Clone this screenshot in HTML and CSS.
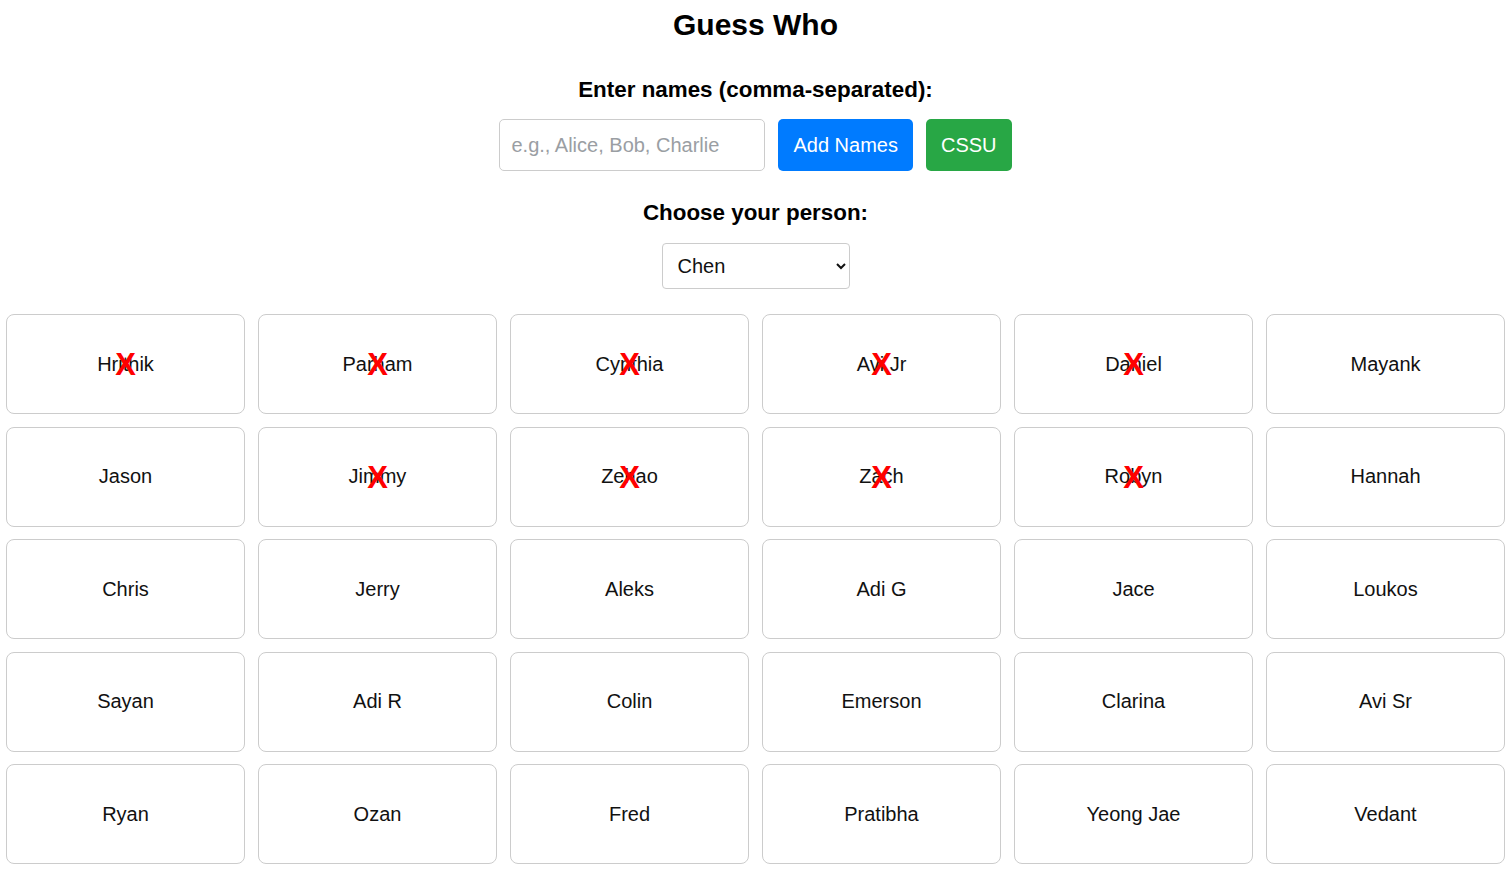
FILE: index.html
```html
<!DOCTYPE html>
<html lang="en">
<head>
<meta charset="utf-8">
<title>Guess Who</title>
<link rel="stylesheet" href="styles.css">
</head>
<body>
<div class="app">
  <h1 class="title">Guess Who</h1>
  <h2 class="label">Enter names (comma-separated):</h2>
  <div class="controls">
    <input class="names-input" type="text" placeholder="e.g., Alice, Bob, Charlie">
    <button class="btn btn-blue">Add Names</button>
    <button class="btn btn-green">CSSU</button>
  </div>
  <h2 class="label label-choose">Choose your person:</h2>
  <div class="select-row">
    <select class="person-select">
      <option>Chen</option>
    </select>
  </div>
  <div class="grid">
    <div class="card out"><span>Hrithik</span><span class="mark">X</span></div>
    <div class="card out"><span>Parham</span><span class="mark">X</span></div>
    <div class="card out"><span>Cynthia</span><span class="mark">X</span></div>
    <div class="card out"><span>Avi Jr</span><span class="mark">X</span></div>
    <div class="card out"><span>Daniel</span><span class="mark">X</span></div>
    <div class="card"><span>Mayank</span></div>

    <div class="card"><span>Jason</span></div>
    <div class="card out"><span>Jimmy</span><span class="mark">X</span></div>
    <div class="card out"><span>Zehao</span><span class="mark">X</span></div>
    <div class="card out"><span>Zach</span><span class="mark">X</span></div>
    <div class="card out"><span>Robyn</span><span class="mark">X</span></div>
    <div class="card"><span>Hannah</span></div>

    <div class="card"><span>Chris</span></div>
    <div class="card"><span>Jerry</span></div>
    <div class="card"><span>Aleks</span></div>
    <div class="card"><span>Adi G</span></div>
    <div class="card"><span>Jace</span></div>
    <div class="card"><span>Loukos</span></div>

    <div class="card"><span>Sayan</span></div>
    <div class="card"><span>Adi R</span></div>
    <div class="card"><span>Colin</span></div>
    <div class="card"><span>Emerson</span></div>
    <div class="card"><span>Clarina</span></div>
    <div class="card"><span>Avi Sr</span></div>

    <div class="card"><span>Ryan</span></div>
    <div class="card"><span>Ozan</span></div>
    <div class="card"><span>Fred</span></div>
    <div class="card"><span>Pratibha</span></div>
    <div class="card"><span>Yeong Jae</span></div>
    <div class="card"><span>Vedant</span></div>
  </div>
</div>
</body>
</html>
```

FILE: styles.css
```css
* { box-sizing: border-box; }

html, body {
  margin: 0;
  padding: 0;
  background: #fff;
}

body {
  font-family: "Liberation Sans", Arial, sans-serif;
  color: #111;
}

.app {
  padding: 8px 5px 0 6px;
  text-align: center;
}

.title {
  margin: 0;
  font-size: 30px;
  font-weight: bold;
  line-height: 34px;
  color: #000;
}

.label {
  margin: 35px 0 0;
  font-size: 22.4px;
  font-weight: bold;
  line-height: 26px;
  color: #000;
}

.controls {
  margin-top: 16px;
  display: flex;
  justify-content: center;
  gap: 13px;
}

.names-input {
  width: 266px;
  height: 52px;
  padding: 0 11px;
  border: 1px solid #ccc;
  border-radius: 5px;
  font-family: "Liberation Sans", Arial, sans-serif;
  font-size: 20px;
  color: #111;
  outline: none;
}

.names-input::placeholder {
  color: #9a9ea3;
}

.btn {
  height: 52px;
  padding: 0 15px;
  border: none;
  border-radius: 5px;
  font-family: "Liberation Sans", Arial, sans-serif;
  font-size: 20px;
  color: #fff;
  cursor: pointer;
}

.btn-blue { background: #007bff; }
.btn-green { background: #28a745; }

.label-choose {
  margin-top: 29px;
}

.select-row {
  margin-top: 17px;
  display: flex;
  justify-content: center;
}

.person-select {
  width: 188px;
  height: 46px;
  padding: 0 10px 0 11px;
  border: 1px solid #ccc;
  border-radius: 4px;
  background: #fff;
  font-family: "Liberation Sans", Arial, sans-serif;
  font-size: 20px;
  color: #111;
}

.grid {
  margin-top: 25px;
  display: grid;
  grid-template-columns: repeat(6, 1fr);
  grid-auto-rows: 100px;
  column-gap: 13px;
  row-gap: 12.5px;
}

.card {
  position: relative;
  display: flex;
  align-items: center;
  justify-content: center;
  border: 1px solid #ccc;
  border-radius: 8px;
  background: #fff;
  font-size: 20px;
  color: #111;
}

.mark {
  position: absolute;
  left: 50%;
  top: 50%;
  transform: translate(-50%, -50%);
  font-size: 31px;
  font-weight: bold;
  color: #f00;
  line-height: 1;
}
```
